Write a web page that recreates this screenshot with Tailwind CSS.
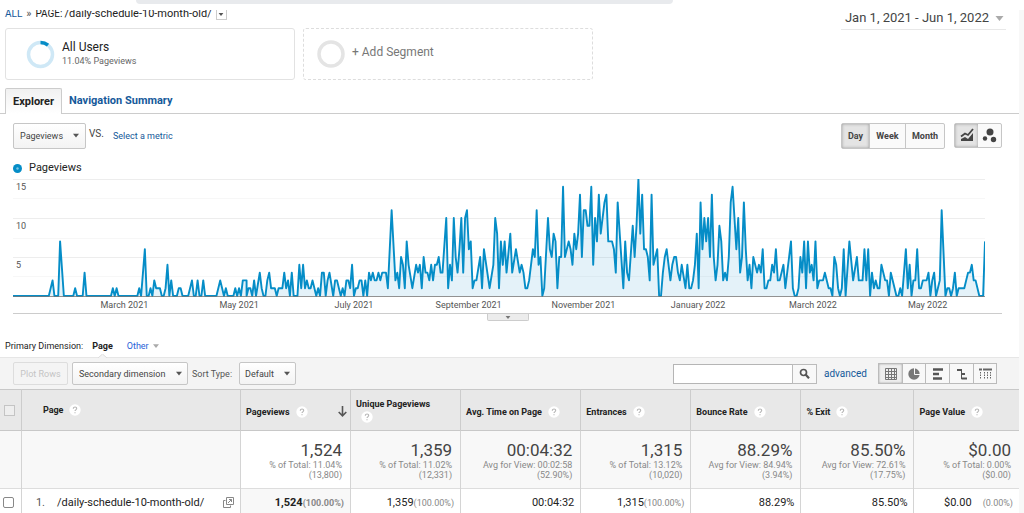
<!DOCTYPE html>
<html lang="en">
<head>
<meta charset="utf-8">
<meta name="viewport" content="width=device-width, initial-scale=1">
<title>Pages - Analytics</title>
<script src="https://cdn.jsdelivr.net/npm/@tailwindcss/browser@4"></script>
</head>
<body class="bg-white font-[Roboto,'Liberation_Sans',sans-serif] text-[#222] text-[11px] leading-4">
<svg class="hidden" aria-hidden="true">
  <symbol id="help" viewBox="0 0 12 12"><circle cx="6" cy="6" r="5.7" fill="#fff"/><path d="M4.3 4.7c0-2.3 3.5-2.2 3.4-.1C7.7 5.800 6 5.900 6 7.100M6 8.200v1.100" fill="none" stroke="#b5b5b5" stroke-width="1.100"/></symbol>
  <symbol id="down" viewBox="0 0 8 5"><path d="M0 0h8L4 5z" fill="currentColor"/></symbol>
</svg>
<div class="h-[10px]"><div class="ml-[13.3%] h-1 w-[52.4%] rounded-b-lg bg-[#e8eaed]"></div></div>
<main class="mr-[5px] shadow-[5px_0_0_#f8f8f8]">
  <header class="flex h-[18px] items-start justify-between">
    <nav aria-label="Breadcrumb" class="flex h-[11px] items-start gap-1 overflow-hidden pl-[5px] text-[11px] leading-[7px]">
      <a href="#" class="text-[10px] text-[#15599a]">ALL</a><span class="text-[#555]">»</span>
      <span class="flex gap-[2px]"><span class="text-[10px]">PAGE:</span><span>/daily-schedule-10-month-old/</span></span>
      <button aria-label="Page options" class="flex h-[10px] w-[11px] items-center justify-center border border-t-0 border-[#ccc] text-[#555]"><svg class="h-[3px] w-[6px]"><use href="#down"/></svg></button>
    </nav>
    <button class="mr-[13px] flex h-5 items-center gap-[6px] border-b border-[#e8e8e8] pr-[2px] pb-[3px] pl-[4px] text-[13px] text-[#444]">Jan 1, 2021 - Jun 1, 2022<svg class="h-[5px] w-[9px] text-[#aaa]"><use href="#down"/></svg></button>
  </header>

  <section aria-label="Segments" class="flex gap-2 pl-[5px]">
    <button class="flex h-[52px] w-[290px] items-center gap-[7px] rounded-[3px] border border-[#e2e2e2] pl-5 text-left">
      <svg class="size-[29px]" viewBox="0 0 29 29" fill="none" stroke-width="3.500"><circle cx="14.500" cy="14.500" r="12" stroke="#cfe8f6"/><path d="M14.500 2.500A12 12 0 0 1 22 5.200" stroke="#058dc7"/></svg>
      <span class="flex flex-col"><span class="text-[12px] leading-[14px]">All Users</span><span class="text-[9px] leading-[14px] text-[#666]">11.04% Pageviews</span></span>
    </button>
    <button class="flex h-[52px] w-[290px] items-center gap-[7px] rounded-[3px] border border-dashed border-[#ddd] pl-[13px] text-[12px] text-[#777]">
      <svg class="size-[28px]" viewBox="0 0 28 28"><circle cx="14" cy="14" r="12" fill="none" stroke="#e4e4e4" stroke-width="3.500"/></svg>
      <span class="pb-1">+ Add Segment</span>
    </button>
  </section>

  <nav aria-label="Report views" class="mt-2 flex h-[26px] border-b border-[#ccc] pl-[5px] text-[11px] font-bold">
    <a href="#" class="-mb-px flex items-center rounded-t-[2px] border border-b-0 border-[#ccc] bg-gradient-to-b from-[#f1f1f1] to-white px-[7px]">Explorer</a>
    <a href="#" class="flex items-center px-[7px] text-[#15599a]">Navigation Summary</a>
  </nav>

  <section aria-label="Chart controls" class="flex h-[43px] items-center justify-between pr-[17px] pl-[13px] text-[10px]">
    <div class="flex items-center">
      <label class="relative flex items-center"><select aria-label="Metric" class="h-[26px] w-[73px] appearance-none rounded-[2px] border border-[#c6c6c6] bg-gradient-to-b from-white to-[#f3f3f3] pl-[6px] text-[9px] text-[#444]"><option>Pageviews</option></select><svg class="pointer-events-none absolute right-[7px] h-[5px] w-[6px] text-[#555]"><use href="#down"/></svg></label>
      <span class="ml-[3px] pb-[3px] text-[10px] text-[#444]">VS.</span>
      <a href="#" class="ml-[9px] text-[9px] text-[#15599a]">Select a metric</a>
    </div>
    <div class="flex gap-[9px] text-[9px] font-bold text-[#444]">
      <div class="flex h-[26px] rounded-[2px] border border-[#c6c6c6] bg-[#fafafa]">
        <button class="w-[27px] bg-[#e4e4e4] shadow-[inset_0_0_3px_#999]">Day</button>
        <button class="w-[36px] border-l border-[#c6c6c6]">Week</button>
        <button class="w-[39px] border-l border-[#c6c6c6]">Month</button>
      </div>
      <div class="flex h-[25px] rounded-[2px] border border-[#c6c6c6] bg-[#fafafa]">
        <button aria-label="Line chart" class="flex w-[23px] items-center justify-center bg-[#e4e4e4] shadow-[inset_0_0_3px_#999]"><svg class="h-[14px] w-[14px]" viewBox="0 0 14 14"><path d="M1 13V11l4-2 3 2 5-6v8z" fill="#444"/><path d="M1 8.500l4-3 3 1.500L13 1" fill="none" stroke="#444" stroke-width="1.800"/></svg></button>
        <button aria-label="Motion chart" class="flex w-[23px] items-center justify-center"><svg class="h-[15px] w-[15px]" viewBox="0 0 15 15" fill="#444"><circle cx="8" cy="4" r="3.500"/><circle cx="3" cy="10.500" r="2.200"/><circle cx="11.500" cy="11.500" r="2.700"/></svg></button>
      </div>
    </div>
  </section>

  <section aria-label="Pageviews by day" class="pr-[17px] pl-[13px]">
    <div class="flex h-[22px] items-center gap-[7px] text-[11px]"><svg class="size-[9px]" viewBox="0 0 9 9"><circle cx="4.500" cy="4.500" r="4.500" fill="#058dc7"/><circle cx="4.500" cy="4.500" r="1.200" fill="#7cc6e6"/></svg>Pageviews</div>
    <div class="relative mr-[17px] h-[118px]">
      <svg id="chart" class="block h-full w-full" viewBox="0 0 972 118" preserveAspectRatio="none">
        <g stroke="#ededed"><path d="M0 .5H972M0 39.500H972M0 78.500H972"/><path stroke="#f7f7f7" d="M0 19.500H972M0 59.500H972M0 97.500H972"/></g>
        <path id="area" fill="#058dc7" fill-opacity=".11"/>
        <path id="line" fill="none" stroke="#058dc7" stroke-width="1.900" stroke-linejoin="round"/>
        <path stroke="#777" stroke-opacity=".8" d="M0 117.500H972"/>
      </svg>
      <div class="absolute top-0 left-[3px] flex flex-col text-[9px] text-[#555]"><span class="h-[39px]">15</span><span class="h-[39px]">10</span><span class="h-[39px]">5</span></div>
    </div>
    <div class="mr-[17px] grid h-4 grid-cols-8 pl-[54px] text-center text-[9px] text-[#555]">
      <span>March 2021</span><span>May 2021</span><span>July 2021</span><span>September 2021</span><span>November 2021</span><span>January 2022</span><span>March 2022</span><span>May 2022</span>
    </div>
    <div class="flex h-[22px] items-start justify-center border-t border-[#ccc]"><button aria-label="Expand chart" class="flex h-[7px] w-[42px] items-center justify-center rounded-b-[2px] border border-t-0 border-[#ccc] bg-[#ececec] text-[#777]"><svg class="h-[3px] w-[6px]"><use href="#down"/></svg></button></div>
  </section>

  <nav aria-label="Primary dimension" class="flex h-[22px] items-center pl-[5px] text-[9px]">
    <span>Primary Dimension:</span>
    <span class="ml-[9px] font-bold">Page</span>
    <a href="#" class="ml-[14px] flex items-center gap-1 text-[#2a62d8]">Other<svg class="h-[4px] w-[6px] text-[#aaa]"><use href="#down"/></svg></a>
  </nav>

  <section aria-label="Table controls" class="relative flex h-[32px] items-center justify-between border-t border-[#e6e6e6] bg-[#f4f4f4] pr-[22px] pl-[13px] text-[9px]">
    <svg class="absolute -top-[4px] left-[98px] h-[4px] w-[9px]" viewBox="0 0 9 4"><path d="M0 4L4.500 0 9 4" fill="#f4f4f4" stroke="#ddd"/></svg>
    <div class="flex items-center gap-1">
      <button disabled class="h-[23px] w-[55px] rounded-[2px] border border-[#ddd] text-[#c4c4c4]">Plot Rows</button>
      <label class="relative flex items-center"><select aria-label="Secondary dimension" class="h-[23px] w-[116px] appearance-none rounded-[2px] border border-[#c6c6c6] bg-gradient-to-b from-white to-[#f3f3f3] pl-[6px] text-[#444]"><option>Secondary dimension</option></select><svg class="pointer-events-none absolute right-[6px] h-[5px] w-[6px] text-[#555]"><use href="#down"/></svg></label>
      <label for="sort" class="text-[#555]">Sort Type:</label>
      <span class="relative ml-[3px] flex items-center"><select id="sort" class="h-[23px] w-[57px] appearance-none rounded-[2px] border border-[#c6c6c6] bg-gradient-to-b from-white to-[#f3f3f3] pl-[5px] text-[#444]"><option>Default</option></select><svg class="pointer-events-none absolute right-[6px] h-[5px] w-[6px] text-[#555]"><use href="#down"/></svg></span>
    </div>
    <div class="flex items-center">
      <input type="search" aria-label="Search rows" class="h-5 w-[120px] border border-[#b5b5b5] bg-white px-1">
      <button aria-label="Search" class="-ml-px flex h-5 w-[25px] items-center justify-center border border-[#bbb] bg-[#f8f8f8]"><svg class="size-[11px]" viewBox="0 0 11 11" fill="none" stroke="#555"><circle cx="4.500" cy="4.500" r="3" stroke-width="1.700"/><path d="M6.800 6.800L10 10.300" stroke-width="2.200"/></svg></button>
      <a href="#" class="mr-[11px] ml-[7px] text-[10px] text-[#15599a]">advanced</a>
      <div class="flex h-[21px] divide-x divide-[#bbb] border border-[#bbb] bg-[#f8f8f8]">
        <button aria-label="Data" class="flex w-6 items-center justify-center bg-[#eee] shadow-[inset_0_0_2px_#999]"><svg class="size-3" viewBox="0 0 12 12" fill="none" stroke="#777"><path d="M.5.5h11v11H.5zM.5 3.500h11M.5 6.500h11M.5 9.500h11M3.500.5v11M6.500.5v11M9.500.5v11"/></svg></button>
        <button aria-label="Percentage" class="flex w-[23px] items-center justify-center"><svg class="size-3" viewBox="0 0 12 12"><circle cx="6" cy="6" r="5.700" fill="#777"/><path d="M6.500 0v6.500H12" fill="none" stroke="#f8f8f8"/></svg></button>
        <button aria-label="Performance" class="flex w-6 items-center justify-center"><svg class="size-3" viewBox="0 0 12 12"><path d="M1 1.500h10M1 6h6M1 10.500h9" stroke="#555" stroke-width="2.400"/></svg></button>
        <button aria-label="Comparison" class="flex w-6 items-center justify-center"><svg class="size-3" viewBox="0 0 12 12" fill="none" stroke="#555"><path d="M5.500 1v10"/><path d="M1 2h4.500M5.500 6H9M5.500 10.500H11" stroke-width="2"/></svg></button>
        <button aria-label="Pivot" class="flex w-[22px] items-center justify-center"><svg class="h-[11px] w-[13px]" viewBox="0 0 13 11" stroke="#666"><path d="M0 1.500h3M4 1.500h9" stroke-width="2"/><path d="M1.500 4v7M5.500 4v7M8.500 4v7M11.500 4v7" stroke-dasharray="1.500 1"/></svg></button>
      </div>
    </div>
  </section>

  <table class="w-full table-fixed border-collapse text-right">
    <colgroup><col class="w-[2.1%]"><col class="w-[21.5%]"><col class="w-[10.8%]"><col class="w-[10.8%]"><col class="w-[11.8%]"><col class="w-[10.8%]"><col class="w-[10.8%]"><col class="w-[11.1%]"><col class="w-[10.3%]"></colgroup>
    <thead>
      <tr class="h-[41px] divide-x divide-[#ccc] border-y border-[#c8c8c8] bg-[#e8e8e8] text-left text-[9px] *:p-0">
        <th><input type="checkbox" disabled aria-label="Select all rows" class="ml-1 block size-[11px] appearance-none border border-[#c4c4c4] bg-[#eee]"></th>
        <th><span class="flex items-center gap-[6px] pl-[21px]">Page<svg class="size-3"><use href="#help"/></svg></span></th>
        <th><span class="flex items-center gap-[6px] pt-[3px] pr-[3px] pl-[5px]">Pageviews<svg class="size-3"><use href="#help"/></svg><svg class="ml-auto h-[11px] w-[9px]" viewBox="0 0 9 11" fill="none" stroke="#555" stroke-width="1.600"><path d="M4.500 0v9.500M.7 6l3.800 3.800L8.300 6"/></svg></span></th>
        <th><span class="flex flex-col pl-[5px] leading-[14px]">Unique Pageviews<svg class="ml-[5px] size-3"><use href="#help"/></svg></span></th>
        <th><span class="flex items-center gap-[6px] pt-[3px] pl-[5px]">Avg. Time on Page<svg class="size-3"><use href="#help"/></svg></span></th>
        <th><span class="flex items-center gap-[6px] pt-[3px] pl-[5px]">Entrances<svg class="size-3"><use href="#help"/></svg></span></th>
        <th><span class="flex items-center gap-[6px] pt-[3px] pl-[5px]">Bounce Rate<svg class="size-3"><use href="#help"/></svg></span></th>
        <th><span class="flex items-center gap-[6px] pt-[3px] pl-[5px]">% Exit<svg class="size-3"><use href="#help"/></svg></span></th>
        <th><span class="flex items-center gap-[6px] pt-[3px] pl-[5px]">Page Value<svg class="size-3"><use href="#help"/></svg></span></th>
      </tr>
    </thead>
    <tbody>
      <tr class="h-[58px] divide-x divide-[#d4d4d4] border-b border-[#ddd] bg-[#f8f8f8] text-[9px] leading-[10px] text-[#888] *:p-0 *:pr-2">
        <td></td><td></td>
        <td class="bg-white"><div class="text-[17px] leading-[20px] text-[#444]">1,524</div>% of Total: 11.04%<br>(13,800)</td>
        <td><div class="text-[17px] leading-[20px] text-[#444]">1,359</div>% of Total: 11.02%<br>(12,331)</td>
        <td><div class="text-[17px] leading-[20px] text-[#444]">00:04:32</div>Avg for View: 00:02:58<br>(52.90%)</td>
        <td><div class="text-[17px] leading-[20px] text-[#444]">1,315</div>% of Total: 13.12%<br>(10,020)</td>
        <td><div class="text-[17px] leading-[20px] text-[#444]">88.29%</div>Avg for View: 84.94%<br>(3.94%)</td>
        <td><div class="text-[17px] leading-[20px] text-[#444]">85.50%</div>Avg for View: 72.61%<br>(17.75%)</td>
        <td><div class="text-[17px] leading-[20px] text-[#444]">$0.00</div>% of Total: 0.00%<br>($0.00)</td>
      </tr>
      <tr class="h-6 divide-x divide-[#d4d4d4] text-[11px] *:p-0 *:pt-1 *:pr-[6px]">
        <td><input type="checkbox" aria-label="Select row 1" class="ml-[3px] block size-[11px] appearance-none rounded-[2px] border border-[#888] bg-white"></td>
        <td><span class="flex items-center gap-3 pl-[14px]"><span class="text-[#555]">1.</span><a href="#">/daily-schedule-10-month-old/</a><svg class="ml-auto size-[11px]" viewBox="0 0 11 11" fill="none" stroke="#888"><path d="M3.500.5h7v7h-7z"/><path d="M2.500 3.500h-2v7h7v-2M5 6l3.500-3.500M6 2.500h2.500V5"/></svg></span></td>
        <td class="bg-[#f8f8f8]"><b>1,524</b><span class="text-[9px] font-bold text-[#888]">(100.00%)</span></td>
        <td>1,359<span class="text-[9px] text-[#888]">(100.00%)</span></td>
        <td>00:04:32</td>
        <td>1,315<span class="text-[9px] text-[#888]">(100.00%)</span></td>
        <td>88.29%</td>
        <td>85.50%</td>
        <td>$0.00<span class="ml-[11px] text-[9px] text-[#888]">(0.00%)</span></td>
      </tr>
    </tbody>
  </table>
</main>
<script>
// Daily pageviews: [offset, "x:value ..."], x in thirds of a chart unit; straight runs are collapsed to their ends.
const runs = [
[0,"39:0 148:0 158:2 164:0 175:0 181:7 192:0 221:0 227:1 232:0 249:0 255:3 261:0 334:0 340:1 345:0 351:1 357:0 414:0 419:1 425:0 436:6 441:0 447:0 453:1 458:0 464:2 470:1 481:1 487:0 493:0 498:1 503:4 509:0 515:2 520:0 532:0 538:1 543:1 549:0 566:0 577:2 583:0 588:0 594:2 600:0 605:0 611:2 617:0 651:0 661:2 672:0 679:1 684:0 701:0 707:1 712:0 718:1 724:0 730:2 737:2 742:0 747:1"],
[750,"3:1 8:0 13:2 19:0 30:3 36:1 42:0 48:0 53:2 59:3 65:1 76:1 82:0 87:1 98:1 104:3 109:1 115:2 121:0 127:3 133:0 144:0 149:4 155:1 160:4 166:1 172:2 178:1 183:1 189:2 200:0 206:1 211:0 217:3 223:3 228:0 234:2 239:3 251:0 257:2 263:2 274:0 279:1 285:0 290:2 296:2 302:1 307:4 313:0 319:1 324:1 330:2 336:2 341:0 347:2 353:0 358:3 364:2 370:3 375:2 381:2 387:3 392:2 398:3 409:3 415:1 426:11 437:2 443:3 449:1 455:5 460:4 466:1 472:7 477:4 488:1 499:4 505:3 511:4 517:1 522:5 528:3 533:3 539:2 545:4 551:2 556:4 562:4 567:5 573:3 579:3 590:10 596:1 602:4 607:2 613:10 618:5 624:3 630:6 635:10 641:3 647:10 652:11 658:6 663:7 670:1 675:2 681:2 692:5 698:1 703:6 720:1 731:4 737:10 743:8 749:1"],
[1500,"4:7 9:4 15:7 21:3 32:8 38:3 49:6 60:3 66:4 72:3 77:1 83:1 89:2 100:6 105:5 111:11 117:4 122:5 129:0 134:1 145:10 151:6 157:5 162:8 168:7 173:1 179:5 185:5 190:14 196:5 207:7 213:6 218:4 224:8 230:6 235:8 241:13 247:5 253:11 259:11 264:9 270:9 275:14 281:4 287:10 292:7 298:13 304:8 315:12 321:13 326:7 338:7 343:6 349:3 355:12 371:1 377:7 383:3 388:2 400:9 405:5 411:9 417:15 422:8 428:13 434:6 439:6 445:5 450:2 456:13 462:4 473:6 479:0 485:0 490:3 496:5 501:6 513:2 518:4 524:5 530:5 535:3 541:2 547:4 558:1 564:4 569:1 575:1 581:2 586:4 591:8 597:1 603:12 609:6 614:10 620:7 626:10 632:5 637:13 643:5 648:2 654:4 660:9 666:7 671:2 677:3 683:2 688:5 694:12 699:14 711:6 716:10 722:3 728:5 733:12 739:6 744:2"],
[2250,"1:4 6:1 12:5 23:3 29:4 34:3 40:6 45:1 51:1 57:2 62:2 68:4 74:3 79:6 85:2 90:2 102:4 107:1 118:5 124:7 130:1 135:0 142:0 148:1 153:5 158:3 164:7 170:1 175:7 181:3 186:4 192:2 198:7 204:1 209:2 220:2 226:3 237:1 243:1 249:0 254:5 260:4 266:1 271:0 277:1 282:6 288:0 299:7 310:2 321:5 327:2 338:2 344:6 350:2 356:6 361:0 367:3 373:1 378:2 384:1 390:1 395:4 407:2 412:2 418:0 424:3 440:0 447:0 452:1 458:0 469:6 475:1 480:4 486:0 491:2 497:2 503:6 509:1 514:1 520:2 531:2 537:3 543:0 548:2 554:3 559:0 570:2 576:11 587:0 593:1 599:1 604:0 610:1 616:3 622:0 627:1 644:1 656:3 661:3 667:4 673:2 678:2 690:0 701:0 706:7"]
];
const pts = runs.flatMap(([o, s]) => s.split(" ").map(p => {
  const [x, v] = p.split(":").map(Number);
  const day = Math.round(((o + x) / 3 - 13) / 972 * 516);
  return (day * 972 / 516).toFixed(2) + " " + (117 - v * 7.8).toFixed(1);
}));
document.getElementById("line").setAttribute("d", "M" + pts.join("L"));
document.getElementById("area").setAttribute("d", "M" + pts.join("L") + "L972 117L0 117Z");
</script>
</body>
</html>
